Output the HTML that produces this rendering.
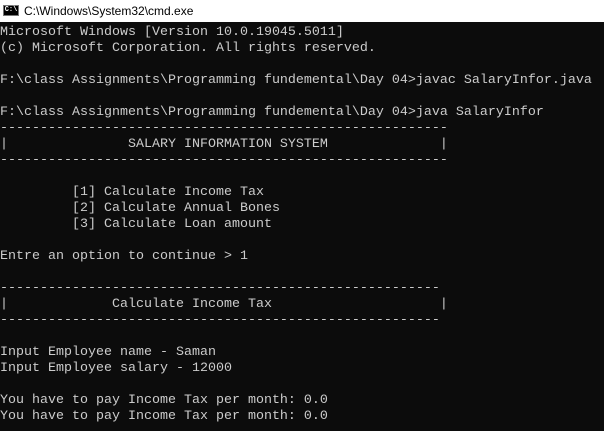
<!DOCTYPE html>
<html><head><meta charset="utf-8"><style>
html,body{margin:0;padding:0;width:604px;height:431px;overflow:hidden;background:#0c0c0c}
#t{position:absolute;left:0;top:0;width:604px;height:22px;background:#fff}
#ic{position:absolute;left:3px;top:5px;width:16px;height:11px;background:#000;border:1px solid #777;box-sizing:border-box;color:#fff;font:bold 7px "Liberation Mono",monospace;line-height:9px;text-align:center}
#tt{position:absolute;left:24px;top:3px;font:12px "Liberation Sans",sans-serif;color:#000;line-height:16px}
pre{position:absolute;left:0;top:25px;margin:0;font-family:"Liberation Mono",monospace;font-size:13.33px;line-height:16px;color:#cccccc;letter-spacing:0}
</style></head><body>
<div id="t"><div id="ic">C:\</div><div id="tt">C:\Windows\System32\cmd.exe</div></div>
<pre>Microsoft Windows [Version 10.0.19045.5011]
(c) Microsoft Corporation. All rights reserved.

F:\class Assignments\Programming fundemental\Day 04&gt;javac SalaryInfor.java

F:\class Assignments\Programming fundemental\Day 04&gt;java SalaryInfor
--------------------------------------------------------
|               SALARY INFORMATION SYSTEM              |
--------------------------------------------------------

         [1] Calculate Income Tax
         [2] Calculate Annual Bones
         [3] Calculate Loan amount

Entre an option to continue &gt; 1

-------------------------------------------------------
|             Calculate Income Tax                     |
-------------------------------------------------------

Input Employee name - Saman
Input Employee salary - 12000

You have to pay Income Tax per month: 0.0
You have to pay Income Tax per month: 0.0</pre>
</body></html>
